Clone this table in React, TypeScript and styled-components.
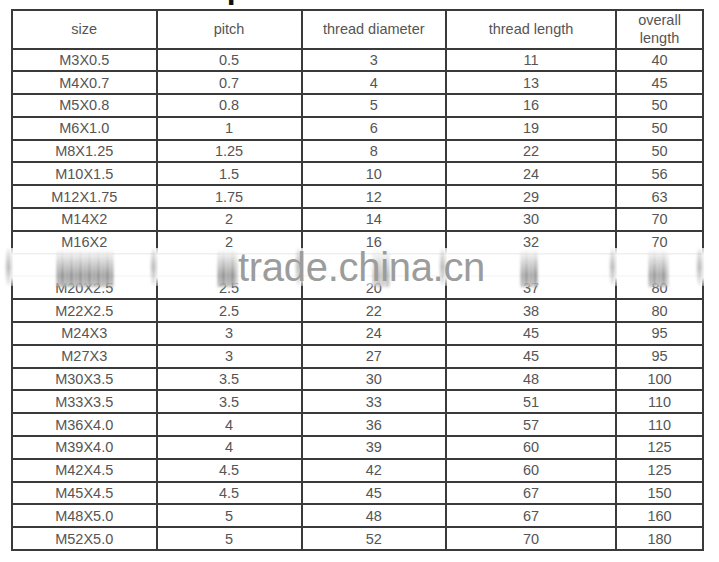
import styled, { createGlobalStyle } from "styled-components";

const GlobalStyle = createGlobalStyle`
  body {
    margin: 0;
    background: #ffffff;
    font-family: "Liberation Sans", Arial, sans-serif;
  }
`;

const Page = styled.div`
  width: 719px;
  height: 562px;
  overflow: hidden;
`;

// only the descender of the heading above the table is in view
const Title = styled.div`
  height: 8.5px;
  overflow: hidden;
  padding-left: 205.5px;
`;

const TitleText = styled.div`
  margin-top: -29px;
  font-size: 32px;
  line-height: 32px;
  font-weight: bold;
  color: #111;
  white-space: nowrap;
`;

const TableWrap = styled.div`
  position: relative;
  margin-left: 11px;
  width: 691px;
`;

const Table = styled.table`
  width: 691px;
  border-collapse: collapse;
  table-layout: fixed;
  color: #555;
  font-size: 14.5px;
`;

const Head = styled.th`
  height: 34px;
  padding: 0 4px;
  border: 2px solid #3a3a3a;
  font-weight: normal;
  line-height: 18.5px;
  text-align: center;
`;

const Cell = styled.td`
  height: 20.8px;
  padding: 0;
  border: 2px solid #3a3a3a;
  text-align: center;
  line-height: 16px;
`;

const Watermark = styled.div`
  position: absolute;
  left: -4px;
  right: -4px;
  top: 239.5px;
  height: 38px;
  background: linear-gradient(
    to bottom,
    rgba(255, 255, 255, 0.75) 0%,
    rgba(255, 255, 255, 0.97) 18%,
    rgba(255, 255, 255, 0.97) 78%,
    rgba(255, 255, 255, 0.35) 100%
  );
`;

const Smear = styled.div<{ $x: number; $w: number; $dark: number }>`
  position: absolute;
  top: 1px;
  bottom: -1px;
  left: ${(p) => p.$x + 4}px;
  width: ${(p) => p.$w}px;
  filter: blur(1.8px);
  background: repeating-linear-gradient(
      90deg,
      rgba(255, 255, 255, 0) 0 2px,
      rgba(255, 255, 255, 0.7) 2px 4px,
      rgba(255, 255, 255, 0) 4px 7px,
      rgba(255, 255, 255, 0.75) 7px 9px
    ),
    linear-gradient(
      to bottom,
      rgba(120, 120, 120, 0) 0%,
      rgba(110, 110, 110, ${(p) => p.$dark * 0.4}) 25%,
      rgba(90, 90, 90, ${(p) => p.$dark}) 70%,
      rgba(90, 90, 90, ${(p) => p.$dark * 0.7}) 100%
    );
`;

const LineSmear = styled.div<{ $x: number }>`
  position: absolute;
  top: 0;
  bottom: 0;
  left: ${(p) => p.$x + 2}px;
  width: 5px;
  border-radius: 50%;
  filter: blur(1.8px);
  background: linear-gradient(
    to bottom,
    rgba(120, 120, 120, 0.15),
    rgba(120, 120, 120, 0.5) 50%,
    rgba(120, 120, 120, 0.15)
  );
`;

const Mark = styled.div`
  position: absolute;
  left: 231px;
  top: -1px;
  font-size: 40px;
  line-height: 40px;
  color: #9c9c9c;
  letter-spacing: -0.3px;
  white-space: nowrap;
`;

const headers = ["size", "pitch", "thread diameter", "thread length", "overall length"];
const widths = [144.5, 145, 144.5, 170, 87];

const rows = [
  ["M3X0.5", "0.5", "3", "11", "40"],
  ["M4X0.7", "0.7", "4", "13", "45"],
  ["M5X0.8", "0.8", "5", "16", "50"],
  ["M6X1.0", "1", "6", "19", "50"],
  ["M8X1.25", "1.25", "8", "22", "50"],
  ["M10X1.5", "1.5", "10", "24", "56"],
  ["M12X1.75", "1.75", "12", "29", "63"],
  ["M14X2", "2", "14", "30", "70"],
  ["M16X2", "2", "16", "32", "70"],
  ["M18X2.5", "2.5", "18", "34", "75"],
  ["M20X2.5", "2.5", "20", "37", "80"],
  ["M22X2.5", "2.5", "22", "38", "80"],
  ["M24X3", "3", "24", "45", "95"],
  ["M27X3", "3", "27", "45", "95"],
  ["M30X3.5", "3.5", "30", "48", "100"],
  ["M33X3.5", "3.5", "33", "51", "110"],
  ["M36X4.0", "4", "36", "57", "110"],
  ["M39X4.0", "4", "39", "60", "125"],
  ["M42X4.5", "4.5", "42", "60", "125"],
  ["M45X4.5", "4.5", "45", "67", "150"],
  ["M48X5.0", "5", "48", "67", "160"],
  ["M52X5.0", "5", "52", "70", "180"],
];

// column lines and smeared cell text under the watermark
const lineXs = [-3, 141.5, 286.5, 431, 601, 687.5];
const smears = [
  { x: 46, w: 56, dark: 0.8 },
  { x: 207, w: 19, dark: 0.8 },
  { x: 362, w: 17, dark: 0.5 },
  { x: 510, w: 17, dark: 0.75 },
  { x: 638, w: 19, dark: 0.75 },
];

export default function App() {
  return (
    <Page>
      <GlobalStyle />
      <Title>
        <TitleText>Specification</TitleText>
      </Title>
      <TableWrap>
        <Table>
          <colgroup>
            {widths.map((w, i) => (
              <col key={i} style={{ width: w }} />
            ))}
          </colgroup>
          <thead>
            <tr>
              {headers.map((h) => (
                <Head key={h}>{h}</Head>
              ))}
            </tr>
          </thead>
          <tbody>
            {rows.map((r) => (
              <tr key={r[0]}>
                {r.map((v, i) => (
                  <Cell key={i}>{v}</Cell>
                ))}
              </tr>
            ))}
          </tbody>
        </Table>
        <Watermark>
          {lineXs.map((x) => (
            <LineSmear key={x} $x={x} />
          ))}
          {smears.map((s) => (
            <Smear key={s.x} $x={s.x} $w={s.w} $dark={s.dark} />
          ))}
          <Mark>trade.china.cn</Mark>
        </Watermark>
      </TableWrap>
    </Page>
  );
}
